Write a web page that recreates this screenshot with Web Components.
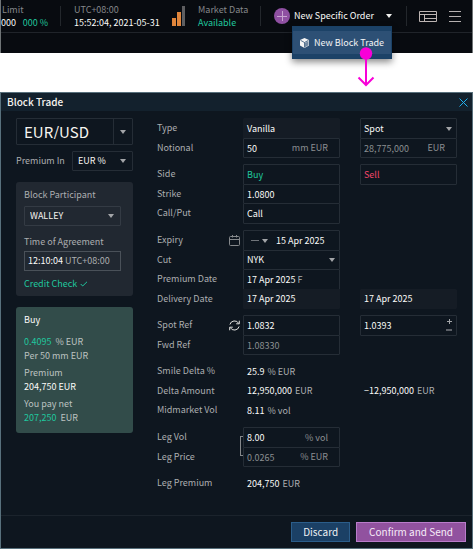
<!DOCTYPE html>
<html lang="en">
<head>
<meta charset="utf-8">
<meta name="viewport" content="width=device-width, initial-scale=1">
<title>Block Trade</title>
<style>
  body { margin: 0; background: #fff; font: 9px/14px "Noto Sans CJK SC", "Noto Sans", sans-serif; color: #acaeb0; }
</style>
</head>
<body>
<trade-app></trade-app>
<script>
const define = (name, html) => customElements.define(name, class extends HTMLElement {
  constructor() {
    super();
    const t = document.createElement('template');
    t.innerHTML = html;
    this.attachShadow({ mode: 'open' }).append(t.content.cloneNode(true));
  }
});

const base = `
  *, *::before, *::after { box-sizing: border-box; }
  button, input, select, output { font: inherit; color: inherit; margin: 0; padding: 0; border: 0; background: none; border-radius: 0; }
  svg { display: block; flex: none; fill: none; }
  .w { color: #fbfbf9; } .g { color: #20c79e; } .r { color: #f5456a; } .d { color: #8b8e91; }
`;

/* Small downward triangle */
define('caret-mark', `<style>:host{display:block;flex:none;pointer-events:none;color:#a3a5a8}svg{display:block}</style>
  <svg width="6" height="4"><path d="M0 0h6L3 4z" fill="currentColor"/></svg>`);

/* Two-line status cell in the top bar */
define('status-cell', `<style>
    :host { display: block; flex: none; line-height: 13px; white-space: nowrap; color: #85878a; }
  </style><slot name="title"></slot><div><slot></slot></div>`);

/* Bordered box that holds one control, with optional unit and caret */
define('field-box', `<style>
    :host { display: flex; align-items: center; min-width: 0; height: calc(100% + 1px); padding: 0 11px 0 3px; border: 1px solid #252d36; border-radius: 1px; box-sizing: border-box; gap: 2px; }
    :host([kind=flat]) { background: #151c25; border-color: #151c25; }
    :host([kind=plain]) { border-color: transparent; gap: 3px; }
    :host([kind=caret]) { padding-right: 4px; }
    :host([kind=step]) { padding-right: 3px; }
  </style><slot></slot>`);

/* A label and up to two fields */
define('trade-row', `<style>
    :host { display: grid; grid-template-columns: 86px minmax(0, 1fr) minmax(0, 1fr); align-items: center; height: 20px; }
    :host(:nth-child(even)) { height: 19px; }
    .label { display: flex; align-items: center; justify-content: space-between; padding-right: 3px; }
    .a { margin-right: 10px; height: 100%; display: grid; }
    .b { margin-left: 10px; height: 100%; display: grid; }
  </style>
  <div class="label"><slot name="label"></slot><slot name="icon"></slot></div>
  <div class="a"><slot></slot></div><div class="b"><slot name="second"></slot></div>`);

define('row-group', `<style>:host{display:block}</style><slot></slot>`);

define('top-bar', `<style>${base}
  :host { display: block; height: 53px; background: #080b10; border: solid #6f7476; border-width: 0 1px; box-sizing: border-box; position: relative; }
  nav { display: flex; align-items: center; height: 33px; border-bottom: 1px solid #20242a; padding-right: 11px; }
  .limit { width: 47px; }
  .limit .t { padding-left: 1px; }
  .row { display: flex; justify-content: space-between; }
  .sep { width: 1px; height: 20px; background: #23272c; flex: none; }
  .new { display: flex; align-items: center; gap: 4px; white-space: nowrap; flex: none; }
  .new caret-mark { margin-left: 8px; color: #f1f1ef; }
  .icon { display: block; flex: none; }
  .menu { position: absolute; right: 80px; top: 26px; width: 100px; height: 33px; background: #1c4267; border: 1px solid #1a4166; box-shadow: 0 3px 7px #0007; padding: 4px 0; display: flex; z-index: 1; }
  .menu button { display: flex; align-items: center; gap: 5px; flex: 1; padding-left: 7px; background: #2d5075; color: #f4f5f6; white-space: nowrap; }
  .arrow { position: absolute; right: 97px; top: 47px; z-index: 2; }
  </style>
  <nav>
    <status-cell class="limit"><div slot="title" class="t">Limit</div><div class="row"><span class="w">000</span><span class="g">000 %</span></div></status-cell>
    <i class="sep" style="margin:0 13px 0 12px"></i>
    <status-cell style="width:98px"><div slot="title">UTC+08:00</div><span class="w">15:52:04, 2021-05-31</span></status-cell>
    <svg width="13" height="20"><path d="M0 12h4v8H0z" fill="#e0853b"/><path d="M5 6h4v14H5z" fill="#e0853b"/><path d="M10 0h3v20h-3z" fill="#5e5e60"/></svg>
    <status-cell style="margin-left:13px;width:62px"><div slot="title">Market Data</div><span class="g">Available</span></status-cell>
    <i class="sep" style="margin-right:13px"></i>
    <button class="new w"><svg width="16" height="16"><circle cx="8" cy="8" r="8" fill="#8f50a2"/><path d="M8.500 3v10M3 8.500h10" stroke="#c9a5d2"/></svg>New Specific Order<caret-mark></caret-mark></button>
    <i class="sep" style="margin-left:auto;margin-right:12px"></i>
    <button class="icon" aria-label="Layout"><svg width="18" height="11" stroke="#bdb5b3"><path d="M.5.5h17v10H.5zM5.500 3.500v7M.5 3.500h17M5.500 7.500h12"/></svg></button>
    <button class="icon" aria-label="Menu" style="margin-left:12px"><svg width="12" height="11" stroke="#b5b0b0"><path d="M0 .5h12M0 5.500h12M0 10.500h12"/></svg></button>
  </nav>
  <div class="menu"><button><svg width="9" height="10"><path d="M4.500 0L9 2v5.500L4.500 10 0 7.500V2z" fill="#f4f4f4"/><path d="M4.500 4.500v5M.5 2.300l4 2.200 4-2.200" stroke="#2d5075" stroke-width=".8"/><path d="M5 5l3.500-2v4.200L5 9.200z" fill="#2d5075" opacity=".65"/></svg>New Block Trade</button></div>
  <svg class="arrow" width="18" height="40"><circle cx="9" cy="6.500" r="6.200" fill="#f800d8"/><path d="M9 6v32M1.500 30.500L9 38l7.500-7.500" stroke="#f800d8" stroke-width="2"/></svg>`);

define('side-panel', `<style>${base}
  :host { display: block; }
  .pair, .sel { display: flex; align-items: center; border: 1px solid #252d36; border-radius: 1px; position: relative; }
  select { appearance: none; flex: 1; min-width: 0; height: 100%; color: #f6f4f0; outline: 0; }
  .pair { height: 27px; font-size: 15px; padding-left: 7px; }
  .pair caret-mark { position: absolute; right: 6px; }
  .pair::after { content: ""; position: absolute; right: 18px; top: 0; bottom: 0; border-left: 1px solid #252d36; }
  .prem { display: flex; align-items: center; justify-content: space-between; margin: 6px 0 11px; white-space: nowrap; }
  .prem .sel { width: 61px; height: 20px; }
  .sel { padding: 0 6px 0 5px; }
  .card { background: #212831; border-radius: 3px; padding: 6px 12px 6px 8px; height: 114px; }
  label { display: block; }
  .card .sel { height: 20px; margin: 4px 0 9px; border-color: #343b44; }
  .time { display: flex; align-items: center; gap: 2px; height: 20px; margin: 2px 0 6px; padding-left: 3px; border: 1px solid #4a5159; white-space: nowrap; }
  input { field-sizing: content; outline: 0; min-width: 0; }
  .ok { display: flex; align-items: center; gap: 3px; }
  .buy { margin-top: 11px; background: #324c4a; border-radius: 3px; padding: 6px 8px 8px; height: 126px; color: #bcc2c0; }
  .buy p { margin: 0; }
  .buy p + p { margin-top: 3px; }
  .buy .h { margin-bottom: 8px; }
  </style>
  <div class="pair"><select aria-label="Currency pair"><option>EUR/USD</option></select><caret-mark></caret-mark></div>
  <div class="prem"><label for="prem">Premium In</label><div class="sel"><select id="prem"><option>EUR %</option></select><caret-mark></caret-mark></div></div>
  <section class="card">
    <label for="part">Block Participant</label>
    <div class="sel"><select id="part"><option>WALLEY</option></select><caret-mark></caret-mark></div>
    <label for="time">Time of Agreement</label>
    <div class="time"><input id="time" class="w" value="12:10:04"><span>UTC+08:00</span></div>
    <div class="ok g">Credit Check<svg width="8" height="6"><path d="M.7 3l2 2L7 .8" stroke="currentColor"/></svg></div>
  </section>
  <section class="buy">
    <p class="h w">Buy</p>
    <p><span class="g">0.4095</span>&nbsp; % EUR<br>Per 50 mm EUR</p>
    <p>Premium<br><span class="w">204,750 EUR</span></p>
    <p>You pay net<br><span class="g">207,250</span>&nbsp; EUR</p>
  </section>`);

define('trade-form', `<style>${base}
  :host { display: grid; gap: 7px; align-content: start; }
  label, .u { white-space: nowrap; }
  input, select { flex: 1; min-width: 0; width: 0; height: 100%; outline: 0; }
  select { appearance: none; }
  .fit { flex: none; width: auto; field-sizing: content; }
  .steps { display: grid; gap: 2px; }
  .steps button { width: 8px; height: 7px; display: grid; place-items: center; }
  .tenor { display: flex; align-items: center; gap: 3px; margin: 0 6px 0 4px; }
  .link { position: relative; }
  .link::before { content: ""; position: absolute; left: 83px; top: 9px; bottom: 10px; width: 3px; border: 1px solid #85888b; border-right: 0; }
  </style>
  <row-group>
    <trade-row><label slot="label" for="type">Type</label><field-box kind="flat"><output id="type" class="w">Vanilla</output></field-box>
      <field-box slot="second" kind="caret"><select class="w" aria-label="Second leg type"><option>Spot</option></select><caret-mark></caret-mark></field-box></trade-row>
    <trade-row><label slot="label" for="not">Notional</label><field-box><input id="not" class="w" value="50"><span class="u d">mm EUR</span></field-box>
      <field-box slot="second" class="d"><input aria-label="Second leg notional" value="28,775,000"><span class="u">EUR</span></field-box></trade-row>
  </row-group>
  <row-group>
    <trade-row><label slot="label" for="side">Side</label><field-box><input id="side" class="g" value="Buy"></field-box>
      <field-box slot="second"><input class="r" aria-label="Second leg side" value="Sell"></field-box></trade-row>
    <trade-row><label slot="label" for="strike">Strike</label><field-box><input id="strike" class="w" value="1.0800"></field-box></trade-row>
    <trade-row><label slot="label" for="cp">Call/Put</label><field-box><input id="cp" class="w" value="Call"></field-box></trade-row>
  </row-group>
  <row-group>
    <trade-row><label slot="label" for="exp">Expiry</label>
      <svg slot="icon" width="11" height="11" stroke="#85888b"><rect x=".5" y="1.500" width="10" height="9" rx="1"/><path d="M.5 4.500h10M3.500 0v2.500M7.500 0v2.500"/></svg>
      <field-box><button aria-label="Tenor" class="tenor"><svg width="8" height="1"><path d="M0 .5h8" stroke="#70747a"/></svg><caret-mark></caret-mark></button><input id="exp" class="w" value="15 Apr 2025"></field-box></trade-row>
    <trade-row><label slot="label" for="cut">Cut</label><field-box kind="caret"><select id="cut" class="w"><option>NYK</option></select><caret-mark></caret-mark></field-box></trade-row>
    <trade-row><label slot="label" for="pd">Premium Date</label><field-box><input id="pd" class="w fit" value="17 Apr 2025"><span>F</span></field-box></trade-row>
    <trade-row><label slot="label" for="dd">Delivery Date</label><field-box kind="flat"><output id="dd" class="w">17 Apr 2025</output></field-box>
      <field-box slot="second" kind="flat"><output class="w">17 Apr 2025</output></field-box></trade-row>
  </row-group>
  <row-group>
    <trade-row><label slot="label" for="spot">Spot Ref</label>
      <button slot="icon" aria-label="Refresh spot"><svg width="11" height="11" stroke="#e0e0de"><path d="M.9 4.500A4.800 4.800 0 0 1 9.800 3.500M10.100 6.500A4.800 4.800 0 0 1 1.200 7.500M10.300.7v3.100H7.200M.7 10.300V7.200h3.100"/></svg></button>
      <field-box><input id="spot" class="w" value="1.0832"></field-box>
      <field-box slot="second" kind="step"><input class="w" aria-label="Second leg spot" value="1.0393"><span class="steps"><button aria-label="Increase"><svg width="7" height="7"><path d="M3.500 1v5M1 3.500h5" stroke="#a3a5a8"/></svg></button><button aria-label="Decrease"><svg width="6" height="2"><path d="M0 1h6" stroke="#5c6067" stroke-width="2"/></svg></button></span></field-box></trade-row>
    <trade-row><label slot="label" for="fwd">Fwd Ref</label><field-box><input id="fwd" class="d" value="1.08330"></field-box></trade-row>
  </row-group>
  <row-group>
    <trade-row><label slot="label" for="sd">Smile Delta %</label><field-box kind="plain"><output id="sd" class="w">25.9</output><span class="u">% EUR</span></field-box></trade-row>
    <trade-row><label slot="label" for="da">Delta Amount</label><field-box kind="plain"><output id="da" class="w">12,950,000</output><span class="u">EUR</span></field-box>
      <field-box slot="second" kind="plain"><output class="w">−12,950,000</output><span class="u">EUR</span></field-box></trade-row>
    <trade-row><label slot="label" for="mv">Midmarket Vol</label><field-box kind="plain"><output id="mv" class="w">8.11</output><span class="u">% vol</span></field-box></trade-row>
  </row-group>
  <row-group class="link">
    <trade-row><label slot="label" for="lv">Leg Vol</label><field-box><input id="lv" class="w" value="8.00"><span class="u d">% vol</span></field-box></trade-row>
    <trade-row><label slot="label" for="lp">Leg Price</label><field-box class="d"><input id="lp" value="0.0265"><span class="u">% EUR</span></field-box></trade-row>
  </row-group>
  <row-group>
    <trade-row><label slot="label" for="lm">Leg Premium</label><field-box kind="plain"><output id="lm" class="w">204,750</output><span class="u">EUR</span></field-box></trade-row>
  </row-group>`);

define('trade-dialog', `<style>${base}
  :host { display: flex; flex-direction: column; flex: 1; background: #0e161f; border: 1px solid #58707c; box-sizing: border-box; }
  header { display: flex; align-items: center; justify-content: space-between; height: 18px; padding: 0 4px 0 6px; background: #13212d; }
  h1 { margin: 0; font-size: 10px; font-weight: 500; color: #f6f4f0; }
  main { flex: 1; display: grid; grid-template-columns: 117px minmax(0, 1fr); gap: 24px; padding: 7px 15px 22px; }
  footer { display: flex; justify-content: flex-end; gap: 6px; padding: 6px; border-top: 1px solid #1b232c; }
  footer button { height: 20px; padding: 0 11px; border: 1px solid #2b5d8a; background: #1b4065; color: #eef1f4; font-size: 10px; white-space: nowrap; }
  footer .go { padding: 0 12px; border-color: #b97cca; background: #91529f; color: #f6ecf8; }
  </style>
  <header><h1>Block Trade</h1><button aria-label="Close"><svg width="9" height="9" stroke="#22b0ee"><path d="M.5.5l8 8M8.500.5l-8 8"/></svg></button></header>
  <main><side-panel></side-panel><trade-form></trade-form></main>
  <footer><button>Discard</button><button class="go">Confirm and Send</button></footer>`);

define('trade-app', `<style>:host{display:flex;flex-direction:column;gap:39px;min-height:100vh}</style><top-bar></top-bar><trade-dialog></trade-dialog>`);
</script>
</body>
</html>
